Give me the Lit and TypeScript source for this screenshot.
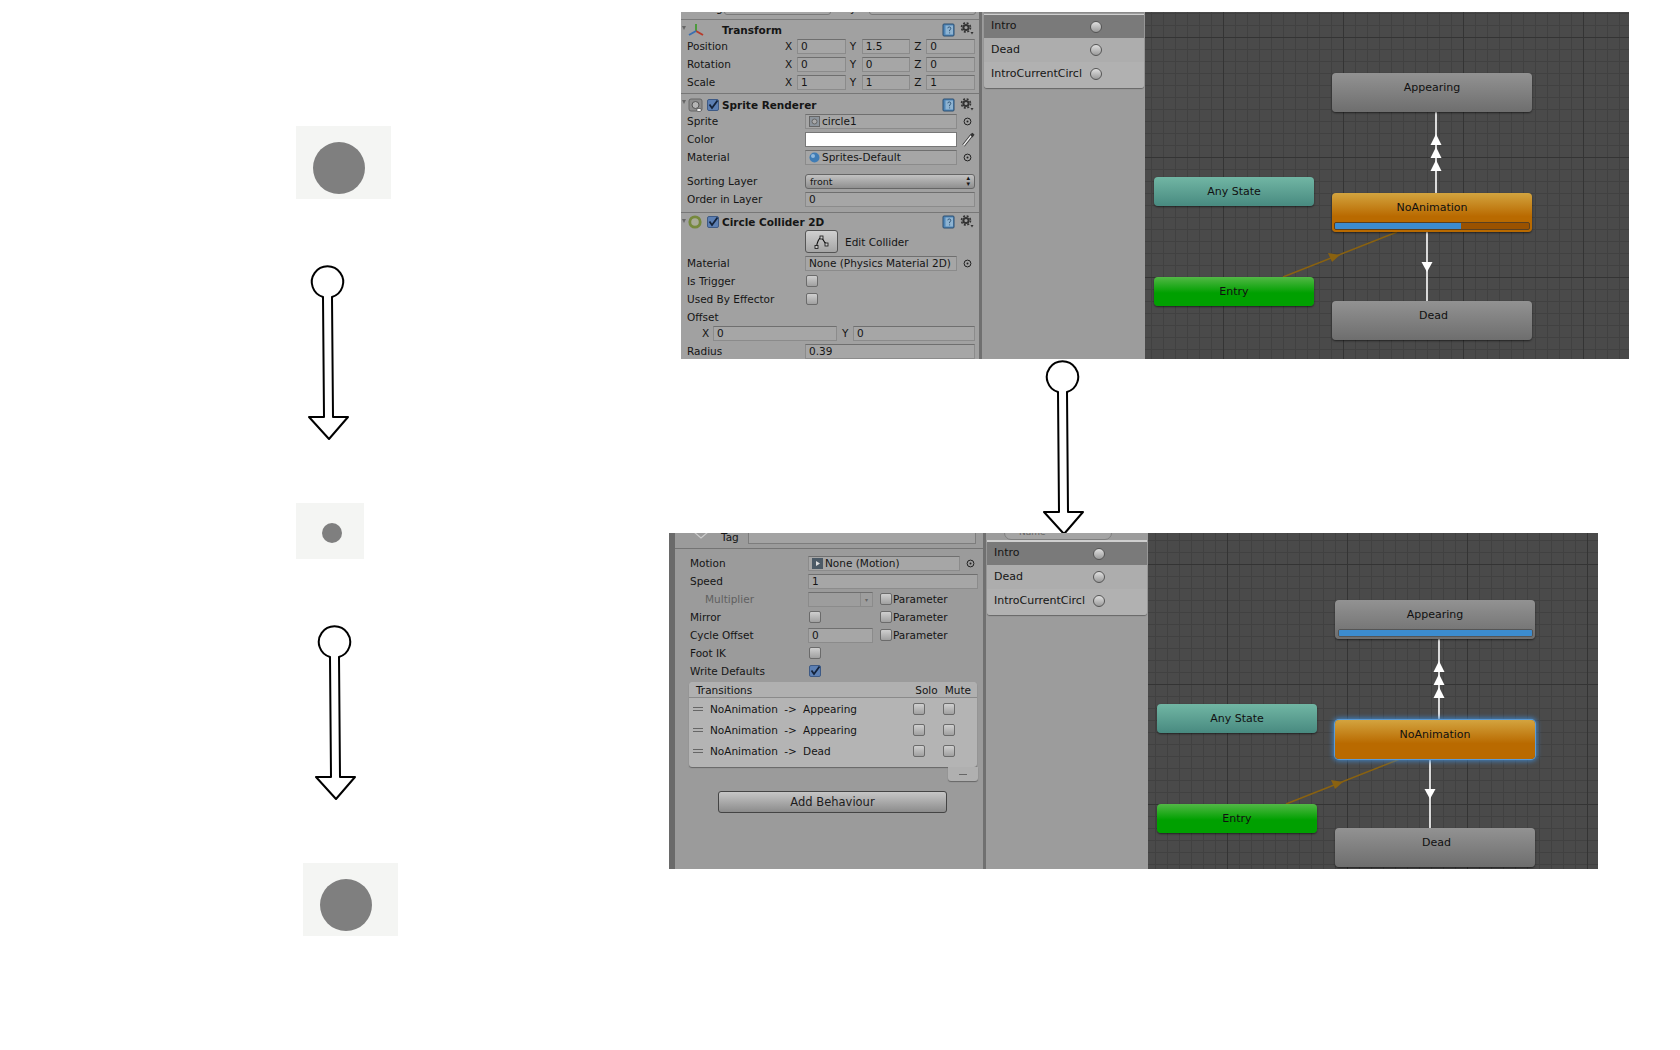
import { LitElement, html, css, svg } from "lit";
import { customElement } from "lit/decorators.js";

const ARROW = "M18 35A15.7 15.7 0 1 1 27 35L28 155L43 155L24 177L4 155L19 155Z";

const helpIcon = html`<svg class="ic" width="13" height="14" viewBox="0 0 13 14"><rect x="1" y="1" width="11" height="12" rx="1" fill="#4f86b8" stroke="#2c4f70"/><rect x="3.5" y="2.5" width="7.5" height="9" fill="#8fb4d2"/><path d="M5.8 5.3a1.5 1.5 0 1 1 1.8 1.6v1.3M7.6 9.4v1" stroke="#2c4f70" stroke-width=".9" fill="none"/></svg>`;
const gearIcon = html`<svg class="ic gear" width="14" height="13" viewBox="0 0 14 13"><circle cx="6" cy="5.5" r="2.6" fill="none" stroke="#333" stroke-width="2"/><circle cx="6" cy="5.5" r="4.5" fill="none" stroke="#333" stroke-width="1.6" stroke-dasharray="2 1.55"/><path d="M10.5 10h3l-1.5 2.4z" fill="#333"/></svg>`;
const picker = html`<span class="pick"><svg width="9" height="9" viewBox="0 0 9 9"><circle cx="4.5" cy="4.5" r="3.4" fill="none" stroke="#222"/><circle cx="4.5" cy="4.5" r="1" fill="#222"/></svg></span>`;
const checkMark = html`<svg width="12" height="12" viewBox="0 0 12 12"><path d="M2.5 5.5L5 9L10.5 1.5" fill="none" stroke="#14233a" stroke-width="1.8"/></svg>`;

interface GNode { name: string; x: number; y: number; w: number; h: number; kind: string; bar?: number; selected?: boolean; }

@customElement("app-root")
export class AppRoot extends LitElement {
  static styles = css`
    :host { display: block; position: relative; width: 1680px; height: 1050px; background: #fff; overflow: hidden; font-family: "DejaVu Sans", sans-serif; font-size: 10.5px; color: #151515; }
    .thumb { position: absolute; background: #f4f5f3; }
    .dot { position: absolute; border-radius: 50%; background: #7f7f7f; }
    .flow { position: absolute; }
    .panel { position: absolute; display: flex; overflow: hidden; }
    .panel.p1 { left: 681px; top: 12px; width: 948px; height: 347px; }
    .panel.p2 { left: 669px; top: 533px; width: 929px; height: 336px; }

    .insp { box-sizing: border-box; background: #a1a1a1; overflow: hidden; flex: none; }
    .p1 .insp { width: 298px; padding: 0 4px 0 6px; }
    .p2 .insp { width: 314px; padding: 0 5px 0 15px; background: #9b9b9b; border-left: 6px solid #6a6a6a; }

    .row { display: flex; align-items: center; height: 18px; white-space: nowrap; flex: none; }
    .lbl { width: 118px; flex: none; }
    .lbl.v { width: 98px; }
    .lbl.dim { color: #606060; padding-left: 15px; width: 103px; }
    .axis { width: 12px; flex: none; }
    .axis.gap { margin-left: 4px; }
    .f { box-sizing: border-box; height: 15px; flex: 1; min-width: 0; background: #a6a6a6; border: 1px solid #8b8b8b; border-top-color: #6f6f6f; padding-left: 3px; line-height: 13px; display: flex; align-items: center; gap: 2px; overflow: hidden; }
    .f.w152 { flex: none; width: 152px; }
    .f.w65 { flex: none; width: 65px; }
    .f.white { background: #fff; border-color: #777; }
    .f.off { background: #9d9d9d; color: #777; justify-content: flex-end; padding: 0; }
    .f.off i { border-left: 1px solid #8a8a8a; width: 11px; height: 13px; display: flex; align-items: center; justify-content: center; font-style: normal; font-size: 6px; color: #666; }
    .pick { width: 18px; flex: none; display: flex; align-items: center; justify-content: flex-end; padding-right: 3px; box-sizing: border-box; }
    .pick.eye { padding-right: 0; }
    .drop { box-sizing: border-box; flex: 1; height: 15px; border: 1px solid #666; border-radius: 3px; background: linear-gradient(#c2c2c2, #8f8f8f); font-size: 9.5px; padding: 0 4px; display: flex; justify-content: space-between; align-items: center; }
    .drop b { font-weight: normal; font-size: 7px; line-height: 6px; text-align: center; }
    .c { box-sizing: border-box; width: 12px; height: 12px; border: 1px solid #6b6b6b; border-radius: 2px; background: linear-gradient(#cfcfcf, #a0a0a0); flex: none; display: block; }
    .c.on { background: #5c7fb3; border-color: #3e5a85; }
    .c.on svg { display: block; margin: -1px; }
    .c.mr { margin-right: 1px; }
    .valc { margin-left: 1px; }
    .gapc { width: 59px; flex: none; }
    .gapc2 { width: 7px; flex: none; }

    .toprow { height: 3px; padding: 0 0 4px 24px; display: flex; align-items: flex-end; border-bottom: 1px solid #7b7b7b; margin-left: -6px; margin-right: -4px; overflow: hidden; }
    .toprow span { line-height: 14px; }
    .toprow .f { flex: none; height: 14px; border: 1px solid #7a7a7a; border-radius: 3px; background: #a6a6a6; }
    .toprow .t1 { width: 107px; margin: 0 7px 0 1px; }
    .toprow .t2 { width: 107px; margin-left: 2px; }

    .hdr { display: flex; align-items: center; height: 18px; font-weight: bold; white-space: nowrap; position: relative; }
    .hdr.first { height: 17px; padding-top: 2px; box-sizing: border-box; }
    .hdr.pt { padding-top: 4px; box-sizing: border-box; }
    .hdr .tri { position: absolute; left: -5px; top: 6px; width: 0; height: 0; border-left: 2px solid transparent; border-right: 2px solid transparent; border-top: 4px solid #666; }
    .hdr .name { flex: 1; }
    .hdr .ic0 { width: 19px; margin-left: 1px; flex: none; display: flex; }
    .hdr .spacer { width: 15px; flex: none; }
    .hdr .c { margin-right: 3px; }
    .hdr .ic { flex: none; }
    .hdr .gear { margin: 0 1px 2px 5px; }
    .sep { border-top: 1px solid #777; margin: 2px -4px 0 -6px; }
    .sep.s4 { margin-top: 4px; }
    .gap6 { height: 6px; }
    .edit { display: flex; align-items: center; height: 23px; margin: -1px 0 1px; }
    .edit .btn { box-sizing: border-box; margin-left: 118px; width: 33px; height: 23px; border: 1px solid #555; border-radius: 3px; background: linear-gradient(#d0d0d0, #a5a5a5); display: flex; align-items: center; justify-content: center; margin-right: 7px; }
    .subx { padding-left: 15px; margin-top: -2px; }
    .subx .axis.ax { width: 11px; }
    .subx .mid { flex: none; width: 124px; }
    .subx .ay { margin-left: 5px; width: 11px; flex: none; }

    .tagrow { height: 15px; display: flex; align-items: center; margin: 0 -5px 0 -15px; padding-left: 18px; border-bottom: 1px solid #747474; overflow: hidden; }
    .tagrow svg { flex: none; margin: -9px 12px 0 0; }
    .tagrow .tg { width: 27px; flex: none; margin-top: -7px; }
    .tagrow .f { flex: none; width: 228px; height: 11px; margin-top: -5px; border: 1px solid #7d7d7d; border-top: 0; background: #a3a3a3; }
    .motion { margin-top: 5px; }
    .param { display: flex; align-items: center; }
    .tlist { box-sizing: border-box; width: 288px; margin: 2px 0 0 -1px; background: #b4b4b4; border-radius: 4px 4px 3px 3px; box-shadow: 0 1px 1px #666; height: 85px; }
    .thead { height: 16px; display: flex; align-items: center; background: #b0b0b0; border-bottom: 1px solid #8a8a8a; border-radius: 4px 4px 0 0; padding: 0 6px 0 7px; justify-content: space-between; box-sizing: border-box; }
    .thead span:last-child { display: flex; gap: 7px; }
    .trow { height: 21px; display: flex; align-items: center; }
    .trow .hand { width: 10px; border-top: 1px solid #666; border-bottom: 1px solid #666; margin: 1px 7px 0 4px; flex: none; height: 2px; }
    .trow .tx { width: 203px; flex: none; white-space: nowrap; word-spacing: 3px; }
    .trow .c + .c { margin-left: 18px; }
    .minus { width: 30px; height: 14px; margin-left: 258px; background: #b0b0b0; border-radius: 0 0 3px 3px; box-shadow: 0 1px 1px #666; display: flex; align-items: center; justify-content: center; }
    .minus i { width: 8px; height: 1px; background: #666; display: block; }
    .add { box-sizing: border-box; width: 229px; height: 22px; margin: 10px 0 0 28px; border: 1px solid #444; border-radius: 3px; background: linear-gradient(#c6c6c6, #8c8c8c); display: flex; align-items: center; justify-content: center; font-size: 11.5px; color: #1c1c1c; }

    .list { box-sizing: border-box; flex: none; width: 166px; background: #9c9c9c; border-left: 3px solid #707070; }
    .p2 .list { width: 165px; }
    .lhead { height: 3px; box-sizing: border-box; border-top: 1px solid #8a8a8a; }
    .p1 .lhead { background: linear-gradient(#9c9c9c 60%, #cfcfcf 60%); margin: 0 1px 0 2px; }
    .p2 .lhead { height: 9px; overflow: hidden; border: 0; padding-left: 17px; background: linear-gradient(#9c9c9c 78%, #cfcfcf 78%); margin: 0 1px 0 1px; }
    .srch { display: block; box-sizing: border-box; width: 108px; height: 14px; margin-top: -7px; border: 1px solid #7f7f7f; border-radius: 7px; background: #a4a4a4; font-size: 9px; color: #666; padding-left: 14px; line-height: 11px; }
    .rows { margin: 0 1px 0 2px; border-radius: 0 0 3px 3px; box-shadow: 0 1px 1px #666; overflow: hidden; }
    .p2 .rows { margin-left: 1px; }
    .lrow { display: flex; align-items: center; height: 24px; padding-left: 7px; background: #adadad; font-size: 11px; }
    .lrow.sel { height: 23px; background: #7a7a7a; }
    .lrow.last { height: 26px; background: #b1b1b1; padding-bottom: 2px; box-sizing: border-box; }
    .lrow span { width: 93px; overflow: hidden; white-space: nowrap; flex: none; margin-top: -2px; }
    .radio { box-sizing: border-box; width: 12px; height: 12px; margin-left: 6px; border-radius: 50%; border: 1px solid #555; background: linear-gradient(#e0e0e0, #9a9a9a); flex: none; }

    .graph { position: relative; flex: 1; overflow: hidden; background-color: #4a4a4a;
      background-image:
        linear-gradient(#343434 1px, transparent 1px), linear-gradient(90deg, #343434 1px, transparent 1px),
        linear-gradient(#414141 1px, transparent 1px), linear-gradient(90deg, #414141 1px, transparent 1px);
      background-size: 120px 120px, 120px 120px, 12px 12px, 12px 12px; }
    .p1 .graph { background-position: 78px 25px, 78px 25px, 6px 1px, 6px 1px; }
    .p2 .graph { background-position: 79px 31px, 79px 31px, 7px 7px, 7px 7px; }
    .edges { position: absolute; left: 0; top: 0; }
    .node { position: absolute; box-sizing: border-box; border-radius: 4px; text-align: center; font-size: 11px; padding-top: 8px; line-height: 14px; color: #101010; box-shadow: 0 1px 2px rgba(0,0,0,.55); }
    .node.gray { background: linear-gradient(#929292, #6e6e6e); }
    .node.dead { padding-left: 3px; }
    .node.orange { background: linear-gradient(#d3a43f, #b96a00 60%); }
    .node.teal { background: linear-gradient(#71b6a4, #488a80); }
    .node.green { background: linear-gradient(#52b846, #00a000 55%); }
    .node.sel { box-shadow: 0 0 0 1px #5c9bd6, 0 0 5px 2px #3f83c4; }
    .bar { position: absolute; left: 2px; right: 2px; bottom: 2px; height: 8px; box-sizing: border-box; border: 1px solid #5a4020; border-radius: 2px; background: #9a5200; overflow: hidden; }
    .bar.g { left: 3px; border-color: #555; }
    .bar i { display: block; height: 100%; background: #3c8ccf; }
  `;

  private thumbs = [
    { x: 296, y: 126, w: 95, h: 73, cx: 43, cy: 42, r: 26 },
    { x: 296, y: 503, w: 68, h: 56, cx: 36, cy: 30, r: 10 },
    { x: 303, y: 863, w: 95, h: 73, cx: 43, cy: 42, r: 26 },
  ];
  private arrows = [[305, 262], [312, 622], [1040, 357]];

  private graph(dy: number, nodes: GNode[]) {
    const up = 291, down = 282;
    const heads = [133, 146, 159].map((b) => b + dy);
    return html`<div class="graph">
      <svg class="edges" width="490" height="340" viewBox="0 0 490 340">
        ${svg`<line x1="${up}" y1="${100 + dy}" x2="${up}" y2="${181 + dy}" stroke="#fff" stroke-width="1.6"/>`}
        ${heads.map((b) => svg`<path d="M${up - 5.5} ${b}L${up} ${b - 11}L${up + 5.5} ${b}Z" fill="#fff"/>`)}
        ${svg`<line x1="${down}" y1="${220 + dy}" x2="${down}" y2="${289 + dy}" stroke="#fff" stroke-width="1.6"/>`}
        ${svg`<path d="M${down - 5.5} ${250 + dy}L${down + 5.5} ${250 + dy}L${down} ${260 + dy}Z" fill="#fff"/>`}
        ${svg`<line x1="138" y1="${265 + dy}" x2="252" y2="${220 + dy}" stroke="#8a6210" stroke-width="1.5"/>`}
        ${svg`<path d="M183 ${241 + dy}L195 ${243 + dy}L187 ${250 + dy}Z" fill="#8a6210"/>`}
      </svg>
      ${nodes.map((n) => html`<div class="node ${n.kind} ${n.selected ? "sel" : ""}" style="left:${n.x}px;top:${n.y + dy}px;width:${n.w}px;height:${n.h}px">${n.name}${n.bar !== undefined
        ? html`<div class="bar ${n.kind === "gray" ? "g" : ""}"><i style="width:${n.bar}%"></i></div>` : ""}</div>`)}
    </div>`;
  }

  private nodes(appBar: number | undefined, noBar: number | undefined, sel: boolean): GNode[] {
    return [
      { name: "Appearing", x: 187, y: 61, w: 200, h: 39, kind: "gray", bar: appBar },
      { name: "Any State", x: 9, y: 165, w: 160, h: 29, kind: "teal" },
      { name: "NoAnimation", x: 187, y: 181, w: 200, h: 39, kind: "orange", bar: noBar, selected: sel },
      { name: "Entry", x: 9, y: 265, w: 160, h: 29, kind: "green" },
      { name: "Dead", x: 187, y: 289, w: 200, h: 39, kind: "gray dead" },
    ];
  }

  private list(head: unknown) {
    return html`<div class="list"><div class="lhead">${head}</div><div class="rows">
      <div class="lrow sel"><span>Intro</span><i class="radio"></i></div>
      <div class="lrow"><span>Dead</span><i class="radio"></i></div>
      <div class="lrow last"><span>IntroCurrentCircl</span><i class="radio"></i></div>
    </div></div>`;
  }

  private vec(label: string, v: string[]) {
    return html`<div class="row"><span class="lbl v">${label}</span>
      <span class="axis">X</span><span class="f">${v[0]}</span>
      <span class="axis gap">Y</span><span class="f">${v[1]}</span>
      <span class="axis gap">Z</span><span class="f">${v[2]}</span></div>`;
  }
  private obj(label: string, icon: unknown, val: string) {
    return html`<div class="row"><span class="lbl">${label}</span><span class="f w152">${icon}${val}</span>${picker}</div>`;
  }
  private field(label: string, val: string) {
    return html`<div class="row"><span class="lbl">${label}</span><span class="f">${val}</span></div>`;
  }
  private check(label: string, on = false) {
    return html`<div class="row"><span class="lbl">${label}</span><i class="c valc ${on ? "on" : ""}">${on ? checkMark : ""}</i></div>`;
  }
  private param() {
    return html`<span class="param"><i class="c mr"></i>Parameter</span>`;
  }
  private header(icon: unknown, name: string, cls: string, on: boolean) {
    return html`<div class="hdr ${cls}"><i class="tri"></i><span class="ic0">${icon}</span>${on ? html`<i class="c on">${checkMark}</i>` : html`<span class="spacer"></span>`}<span class="name">${name}</span>${helpIcon}${gearIcon}</div>`;
  }

  private inspectorTop() {
    const axes = html`<svg width="16" height="14" viewBox="0 0 16 14"><path d="M8 8V1" stroke="#4c9a3c" stroke-width="2"/><path d="M8 8L15 12" stroke="#b83a2a" stroke-width="2"/><path d="M8 8L1 12" stroke="#3c6fb0" stroke-width="2"/></svg>`;
    const spr = html`<svg width="15" height="14" viewBox="0 0 15 14"><rect x="1" y="1" width="13" height="12" rx="2" fill="#8d8d8d" stroke="#666"/><circle cx="7.5" cy="7" r="3.5" fill="#b5b5b5" stroke="#555"/><ellipse cx="11" cy="12" rx="2.5" ry="1.5" fill="#fff" stroke="#333" stroke-width=".6"/></svg>`;
    const col = html`<svg width="16" height="14" viewBox="0 0 16 14"><circle cx="7" cy="7" r="5.2" fill="#a9ab98" stroke="#76893c" stroke-width="2.8"/></svg>`;
    const sprite = html`<svg width="11" height="11" viewBox="0 0 11 11"><rect x=".5" y=".5" width="10" height="10" fill="#8c949c" stroke="#666"/><circle cx="5.5" cy="5.5" r="2.5" fill="#aaa" stroke="#666"/></svg>`;
    const ball = html`<svg width="11" height="11" viewBox="0 0 11 11"><circle cx="5.5" cy="5.5" r="5" fill="#3f7cb5"/><circle cx="4" cy="4" r="2" fill="#8fb8dc"/></svg>`;
    return html`<div class="insp">
      <div class="toprow"><span>Tag</span><span class="f t1"></span><span>Layer</span><span class="f t2"></span></div>
      ${this.header(axes, "Transform", "first", false)}
      ${this.vec("Position", ["0", "1.5", "0"])}
      ${this.vec("Rotation", ["0", "0", "0"])}
      ${this.vec("Scale", ["1", "1", "1"])}
      <div class="sep"></div>
      ${this.header(spr, "Sprite Renderer", "pt", true)}
      ${this.obj("Sprite", sprite, "circle1")}
      <div class="row"><span class="lbl">Color</span><span class="f w152 white"></span><span class="pick eye"><svg width="13" height="15" viewBox="0 0 13 15"><path d="M1.5 13.5L9 4" stroke="#333" stroke-width="3"/><path d="M1.5 13.5L9 4" stroke="#eee" stroke-width="1.5"/><path d="M8 2.5L10.5 0.8L12.5 2.8L10.5 5.5Z" fill="#333"/></svg></span></div>
      ${this.obj("Material", ball, "Sprites-Default")}
      <div class="gap6"></div>
      <div class="row"><span class="lbl">Sorting Layer</span><span class="drop">front<b>▴<br />▾</b></span></div>
      ${this.field("Order in Layer", "0")}
      <div class="sep s4"></div>
      ${this.header(col, "Circle Collider 2D", "", true)}
      <div class="edit"><span class="btn"><svg width="15" height="14" viewBox="0 0 15 14"><path d="M2.5 11.5C3 8 5 2.5 7 2.5S9 7 12.5 9" fill="none" stroke="#111" stroke-width="1.1"/><rect x="1" y="10.5" width="3" height="3" fill="#ccc" stroke="#111" stroke-width=".8"/><rect x="6" y="1" width="3" height="3" fill="#ccc" stroke="#111" stroke-width=".8"/><rect x="11" y="8" width="3" height="3" fill="#ccc" stroke="#111" stroke-width=".8"/></svg></span>Edit Collider</div>
      ${this.obj("Material", "", "None (Physics Material 2D)")}
      ${this.check("Is Trigger")}
      ${this.check("Used By Effector")}
      <div class="row"><span class="lbl">Offset</span></div>
      <div class="row subx"><span class="axis ax">X</span><span class="f mid">0</span><span class="ay">Y</span><span class="f">0</span></div>
      ${this.field("Radius", "0.39")}
    </div>`;
  }

  private inspectorBottom() {
    const tr = (t: string) => html`<div class="trow"><i class="hand"></i><span class="tx">${t}</span><i class="c"></i><i class="c"></i></div>`;
    const motion = html`<svg width="11" height="11" viewBox="0 0 11 11"><rect width="11" height="11" fill="#4c5a66"/><path d="M4 3L8 5.5L4 8Z" fill="#ddd"/></svg>`;
    return html`<div class="insp">
      <div class="tagrow"><svg width="16" height="8" viewBox="0 0 16 8"><path d="M1 0L8 6L15 0" fill="none" stroke="#ccc" stroke-width="1.2"/></svg><span class="tg">Tag</span><span class="f"></span></div>
      <div class="motion"></div>
      ${this.obj("Motion", motion, "None (Motion)")}
      ${this.field("Speed", "1")}
      <div class="row"><span class="lbl dim">Multiplier</span><span class="f w65 off"><i>▾</i></span><span class="gapc2"></span>${this.param()}</div>
      <div class="row"><span class="lbl">Mirror</span><i class="c valc"></i><span class="gapc"></span>${this.param()}</div>
      <div class="row"><span class="lbl">Cycle Offset</span><span class="f w65">0</span><span class="gapc2"></span>${this.param()}</div>
      ${this.check("Foot IK")}
      ${this.check("Write Defaults", true)}
      <div class="tlist">
        <div class="thead"><span>Transitions</span><span><span>Solo</span><span>Mute</span></span></div>
        ${tr("NoAnimation -> Appearing")}
        ${tr("NoAnimation -> Appearing")}
        ${tr("NoAnimation -> Dead")}
      </div>
      <div class="minus"><i></i></div>
      <div class="add">Add Behaviour</div>
    </div>`;
  }

  render() {
    return html`
      ${this.thumbs.map((t) => html`<div class="thumb" style="left:${t.x}px;top:${t.y}px;width:${t.w}px;height:${t.h}px"><div class="dot" style="left:${t.cx - t.r}px;top:${t.cy - t.r}px;width:${t.r * 2}px;height:${t.r * 2}px"></div></div>`)}
      ${this.arrows.map(([x, y]) => html`<svg class="flow" style="left:${x}px;top:${y}px" width="48" height="180" viewBox="0 0 48 180"><path d="${ARROW}" fill="#fff" stroke="#000" stroke-width="2" stroke-linejoin="round"/></svg>`)}
      <div class="panel p1">${this.inspectorTop()}${this.list("")}${this.graph(0, this.nodes(undefined, 65, false))}</div>
      <div class="panel p2">${this.inspectorBottom()}${this.list(html`<span class="srch">Name</span>`)}${this.graph(6, this.nodes(100, undefined, true))}</div>
    `;
  }
}
